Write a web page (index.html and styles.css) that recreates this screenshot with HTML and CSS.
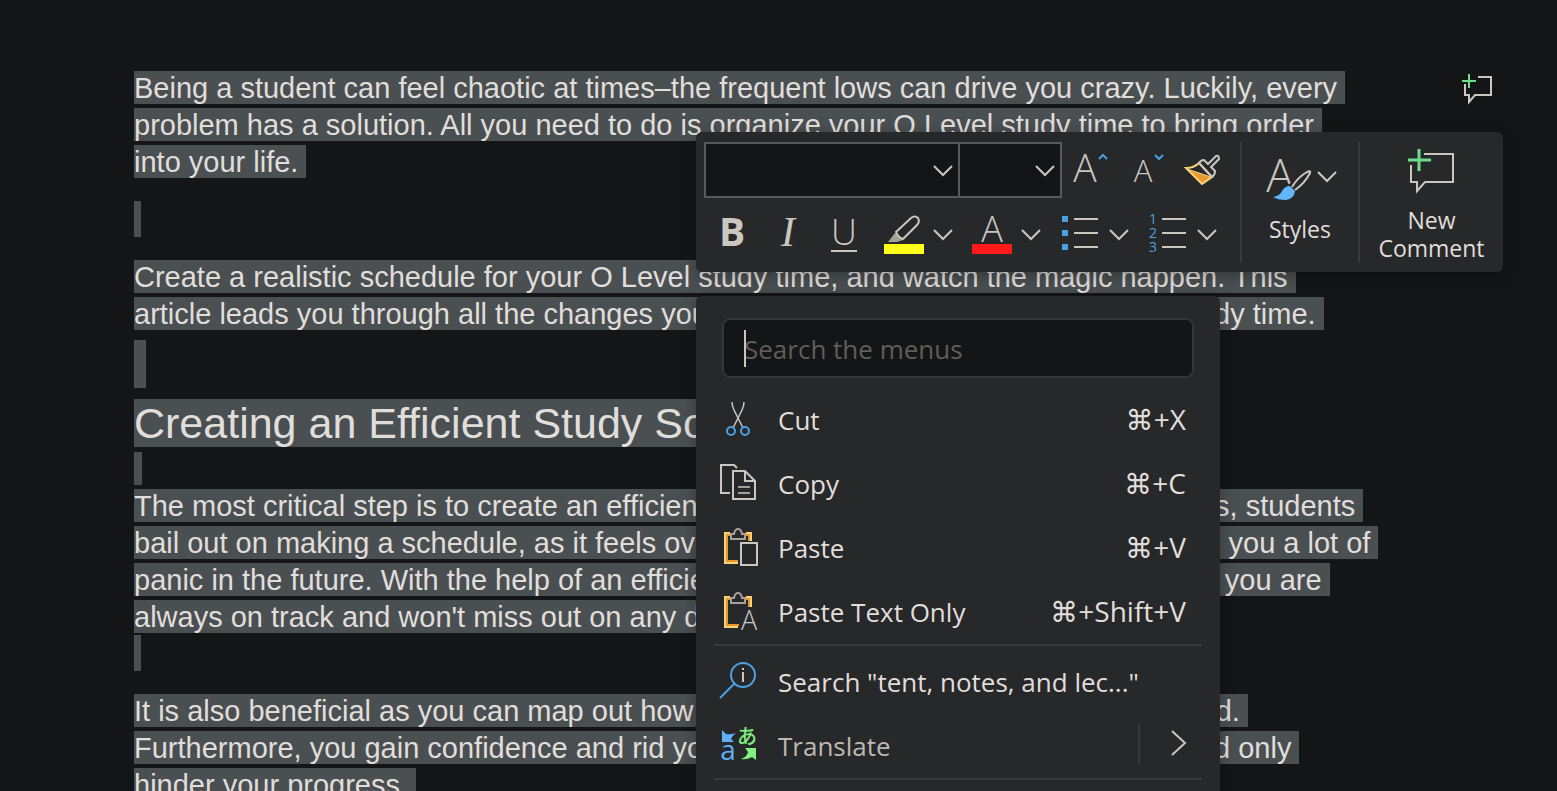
FILE: index.html
```html
<!DOCTYPE html>
<html lang="en">
<head>
  <meta charset="UTF-8">
  <title>Study Schedule</title>
  <link rel="stylesheet" href="styles.css">
</head>
<body>

  <main class="page">
    <article class="document">
      <p>
        <mark>Being a student can feel chaotic at times–the frequent lows can drive you crazy. Luckily, every<br>
        problem has a solution. All you need to do is organize your O Level study time to bring order<br>
        into your life.</mark>
      </p>
      <div class="blank blank-tall"></div>
      <p>
        <mark>Create a realistic schedule for your O Level study time, and watch the magic happen. This<br>
        article leads you through all the changes you need to make to help optimize your study time.</mark>
      </p>
      <div class="blank blank-title"></div>
      <h1><mark>Creating an Efficient Study Schedule</mark></h1>
      <div class="blank blank-small"></div>
      <p>
        <mark>The most critical step is to create an efficient useful study schedule. Most of the times, students<br>
        bail out on making a schedule, as it feels overwhelming, but starting it early can save you a lot of<br>
        panic in the future. With the help of an efficient simple schedule, you can ensure that you are<br>
        always on track and won't miss out on any deadlines.</mark>
      </p>
      <div class="blank blank-after"></div>
      <p>
        <mark>It is also beneficial as you can map out how your school day and night will be planned.<br>
        Furthermore, you gain confidence and rid yourself of the usual exam stress that could only<br>
        hinder your progress.</mark>
      </p>
    </article>

    <button class="margin-comment" aria-label="Add comment">
      <svg width="34" height="34" viewBox="0 0 34 34">
        <path class="line" d="M18 5H31V23H15L9 30V23H5V12"/>
        <path class="green" d="M9 2V16M2 9H16"/>
      </svg>
    </button>

    <!-- Mini toolbar -->
    <div class="toolbar">
      <div class="tools">
        <div class="tool-row">
          <div class="picker picker-font">
            <select aria-label="Font"><option></option></select>
            <svg class="chevron" width="20" height="20" viewBox="0 0 20 20"><path class="line" d="M1 6L10 15L19 6"/></svg>
          </div>
          <div class="picker picker-size">
            <select aria-label="Font size"><option></option></select>
            <svg class="chevron" width="20" height="20" viewBox="0 0 20 20"><path class="line" d="M1 6L10 15L19 6"/></svg>
          </div>
          <button class="tool" aria-label="Increase font size">
            <svg width="40" height="40" viewBox="0 0 40 40">
              <text class="letter" x="14" y="32" font-size="39">A</text>
              <path class="blue" d="M28 9L32 5L36 9"/>
            </svg>
          </button>
          <button class="tool" aria-label="Decrease font size">
            <svg width="40" height="40" viewBox="0 0 40 40">
              <text class="letter" x="16" y="32" font-size="31">A</text>
              <path class="blue" d="M28 5L32 9L36 5"/>
            </svg>
          </button>
          <button class="tool" aria-label="Format painter">
            <svg width="40" height="40" viewBox="0 0 40 40">
              <path d="M4 19L28 27L19 34Z" fill="#e8992e"/>
              <path d="M3 18Q11 18 16 13L29 27L19 34Z" fill="none" stroke="#f9d27c" stroke-width="2"/>
              <path d="M4 19L28 27" stroke="#f9d27c" stroke-width="1"/>
              <path class="line" d="M16 13Q18 10 21 10L25 14L33 6Q36 5 36 9L28 17L32 21Q32 25 29 27Z"/>
            </svg>
          </button>
        </div>
        <div class="tool-row">
          <button class="tool bold" aria-label="Bold">B</button>
          <button class="tool italic" aria-label="Italic">I</button>
          <button class="tool underline" aria-label="Underline"><span>U</span></button>
          <button class="tool-split" aria-label="Text highlight color">
            <svg width="40" height="40" viewBox="0 0 40 40">
              <path d="M4 28L11 19L19 26L13 28Z" fill="#a8a196"/>
              <path class="line" d="M12 18L27 4Q31 1 34 4Q36 8 33 11L19 25Q14 23 12 18Z"/>
              <rect y="30" width="40" height="10" fill="#ffff1a"/>
            </svg>
            <svg width="20" height="20" viewBox="0 0 20 20"><path class="line" d="M1 6L10 15L19 6"/></svg>
          </button>
          <button class="tool-split" aria-label="Font color">
            <svg width="40" height="40" viewBox="0 0 40 40">
              <text class="letter" x="20" y="28" font-size="36">A</text>
              <rect y="30" width="40" height="10" fill="#ff1a1a"/>
            </svg>
            <svg width="20" height="20" viewBox="0 0 20 20"><path class="line" d="M1 6L10 15L19 6"/></svg>
          </button>
          <button class="tool-split" aria-label="Bullets">
            <svg width="40" height="40" viewBox="0 0 40 40">
              <path d="M2 2h6v6H2zM2 16h6v6H2zM2 30h6v6H2z" fill="#4ca0e0"/>
              <path class="line" d="M14 5H38M14 19H38M14 33H38"/>
            </svg>
            <svg width="20" height="20" viewBox="0 0 20 20"><path class="line" d="M1 6L10 15L19 6"/></svg>
          </button>
          <button class="tool-split" aria-label="Numbering">
            <svg width="40" height="40" viewBox="0 0 40 40">
              <g class="digits">
                <text x="5" y="10">1</text>
                <text x="5" y="24">2</text>
                <text x="5" y="38">3</text>
              </g>
              <path class="line" d="M14 5H38M14 19H38M14 33H38"/>
            </svg>
            <svg width="20" height="20" viewBox="0 0 20 20"><path class="line" d="M1 6L10 15L19 6"/></svg>
          </button>
        </div>
      </div>

      <button class="big-tool styles">
        <span class="big-icon">
          <svg width="48" height="48" viewBox="0 0 48 48">
            <text class="letter" x="15" y="38" font-size="46">A</text>
            <path d="M9 43Q15 42 17 37Q20 32 25 32L44 17Q48 15 46 20L30 38Q28 46 19 46Q12 46 9 43Z" fill="#27282a" stroke="#27282a" stroke-width="4"/>
            <path class="line" d="M27 33Q33 23 42 18Q46 16 45 19Q40 29 30 36"/>
            <path d="M8 43Q15 42 17 37Q20 32 25 32L30 37Q29 45 21 46Q13 46 8 43Z" fill="#62b5fb"/>
          </svg>
          <svg width="20" height="20" viewBox="0 0 20 20"><path class="line" d="M2 4L11 13L20 4"/></svg>
        </span>
        Styles
      </button>

      <button class="big-tool comment">
        <svg width="48" height="46" viewBox="0 0 48 46">
          <path class="line" d="M16 6H45V34H17L9 43V34H3V17"/>
          <path class="green wide" d="M11 1V23M0 12H23"/>
        </svg>
        New<br>Comment
      </button>
    </div>

    <!-- Context menu -->
    <div class="menu">
      <div class="search">
        <input type="text" placeholder="Search the menus" aria-label="Search the menus">
        <span class="caret"></span>
      </div>
      <button class="item">
        <svg width="40" height="40" viewBox="0 0 40 40">
          <path class="line thin" d="M14 2Q14 6 16 10L25 28M26 2Q26 6 24 10L15 28"/>
          <circle class="blue" cx="13" cy="31" r="4"/>
          <circle class="blue" cx="27" cy="31" r="4"/>
        </svg>
        <span>Cut</span><kbd>⌘+X</kbd>
      </button>
      <button class="item">
        <svg width="40" height="40" viewBox="0 0 40 40">
          <path class="line" d="M12 29H3V1H16L19 4M15 7H27L37 17V35H15ZM27 7V17H37"/>
          <path class="dim" d="M20 23H32M20 29H32"/>
        </svg>
        <span>Copy</span><kbd>⌘+C</kbd>
      </button>
      <button class="item">
        <svg width="40" height="40" viewBox="0 0 40 40">
          <path class="yellow" d="M12 5H7V35H20M28 5H33V13"/>
          <path class="orange" d="M12 7H9V33H20M28 7H31V13"/>
          <path class="dim" d="M13 11V6H16Q17 1 20 1Q23 1 24 6H27V11Z"/>
          <path class="line" d="M23 15H39V37H23Z"/>
        </svg>
        <span>Paste</span><kbd>⌘+V</kbd>
      </button>
      <button class="item">
        <svg width="40" height="40" viewBox="0 0 40 40">
          <path class="yellow" d="M12 5H7V35H20M28 5H33V15"/>
          <path class="orange" d="M12 7H9V33H21M28 7H31V15"/>
          <path class="dim" d="M13 11V6H16Q17 1 20 1Q23 1 24 6H27V11Z"/>
          <text class="letter" x="31" y="38" font-size="27">A</text>
        </svg>
        <span>Paste Text Only</span><kbd>⌘+Shift+V</kbd>
      </button>
      <hr>
      <button class="item">
        <svg width="40" height="40" viewBox="0 0 40 40">
          <circle class="blue" cx="25" cy="13" r="12"/>
          <path class="blue" d="M17 21L2 36"/>
          <path class="line" d="M25 6V8M25 10V20"/>
        </svg>
        <span>Search "tent, notes, and lec..."</span>
      </button>
      <button class="item translate">
        <svg width="40" height="40" viewBox="0 0 40 40">
          <path d="M4 4L8 8Q12 9 18 7Q14 10 13 13L16 16H4Z" fill="#5fb2f8"/>
          <path d="M38 22V34L34 31Q29 34 23 33Q29 31 30 26L27 22Z" fill="#7ff07f"/>
          <text class="latin" x="10" y="34">a</text>
          <text class="kana" x="29" y="18">あ</text>
        </svg>
        <span>Translate</span>
        <svg class="submenu" width="16" height="26" viewBox="0 0 16 26"><path class="line" d="M2 0L15 12L2 24"/></svg>
      </button>
      <hr>
    </div>
  </main>

</body>
</html>
```

FILE: styles.css
```css
* {
  box-sizing: border-box;
}
body {
  margin: 0;
  background: #141517;
  color: #e0dedb;
  font-family: "Open Sans", "Noto Sans", "DejaVu Sans", sans-serif;
}
.page {
  position: relative;
  height: 100vh;
  overflow: hidden;
}

/* document */
.document {
  padding: 70px 0 0 134px;
  font-family: "Liberation Sans", Arial, sans-serif;
  font-size: 29px;
  line-height: 37px;
  white-space: nowrap;
}
.document p,
.document h1 {
  margin: 0;
}
.document h1 {
  font-size: 43px;
  line-height: 48px;
  font-weight: normal;
}
mark {
  background: #4a4f52;
  color: #e0dedb;
  padding: 1px 8px 0 0;
  -webkit-box-decoration-break: clone;
  box-decoration-break: clone;
}
h1 mark {
  padding-top: 0;
}
.blank {
  width: 7px;
  height: 36px;
  background: #4a4f52;
}
.blank-tall {
  margin: 20px 0 22px;
}
.blank-title {
  width: 12px;
  height: 48px;
  margin: 7px 0 11px;
}
.blank-small {
  width: 8px;
  height: 33px;
  margin: 5px 0 3px;
}
.blank-after {
  margin: -1px 0 22px;
}

/* buttons and icons */
button {
  border: none;
  background: none;
  color: inherit;
  font-family: inherit;
  padding: 0;
  cursor: pointer;
}
svg {
  display: block;
  flex: none;
  fill: none;
  overflow: visible;
}
.line {
  stroke: #cbc6c0;
  stroke-width: 2;
}
.thin {
  stroke-width: 1.5;
}
.dim {
  stroke: #a8a196;
  stroke-width: 2;
}
.blue {
  stroke: #4ca0e0;
  stroke-width: 2;
}
.green {
  stroke: #6fdd87;
  stroke-width: 2;
}
.wide {
  stroke-width: 3;
}
.yellow {
  stroke: #f9d27c;
  stroke-width: 2;
}
.orange {
  stroke: #e8992e;
  stroke-width: 2;
}
.letter {
  fill: #cbc6c0;
  font-weight: 300;
  text-anchor: middle;
}
.digits {
  fill: #4ca0e0;
  font-size: 14px;
  text-anchor: middle;
}
.latin {
  fill: #5fb2f8;
  font-size: 28px;
  text-anchor: middle;
}
.kana {
  fill: #7ff07f;
  font-family: "Noto Sans CJK JP", sans-serif;
  font-size: 20px;
  font-weight: 500;
  text-anchor: middle;
}
.margin-comment {
  position: absolute;
  top: 72px;
  right: 63px;
}

/* mini toolbar */
.toolbar {
  position: absolute;
  top: 132px;
  left: 696px;
  display: flex;
  padding: 10px 0 10px 8px;
  background: #27282a;
  border-radius: 6px;
  box-shadow: 0 4px 16px rgba(0, 0, 0, 0.3);
}
.tools {
  padding-right: 9px;
}
.tool-row {
  display: flex;
  align-items: center;
  height: 56px;
}
.tool-row + .tool-row {
  margin-top: 8px;
}
.picker {
  position: relative;
}
.picker select {
  appearance: none;
  display: block;
  width: 100%;
  height: 56px;
  border: 2px solid #555a5f;
  border-radius: 0;
  background: #141517;
  color: inherit;
}
.picker-font {
  width: 256px;
}
.picker-size {
  width: 104px;
  margin: 0 1px 0 -2px;
}
.chevron {
  position: absolute;
  right: 7px;
  top: 18px;
  pointer-events: none;
}
.tool {
  display: flex;
  justify-content: center;
  align-items: center;
  width: 56px;
  height: 56px;
  color: #cbc6c0;
}
.tool-split {
  display: flex;
  align-items: center;
  gap: 9px;
  width: 88px;
  height: 56px;
  padding-left: 12px;
}
.bold {
  padding-bottom: 8px;
  font-size: 39px;
  font-weight: 700;
}
.italic {
  padding-bottom: 4px;
  font-family: "Liberation Serif", serif;
  font-size: 42px;
  font-style: italic;
}
.underline {
  padding-bottom: 2px;
  font-size: 36px;
  font-weight: 300;
}
.underline span {
  line-height: 36px;
  border-bottom: 2px solid #cbc6c0;
}
.big-tool {
  display: flex;
  flex-direction: column;
  align-items: center;
  height: 120px;
  border-left: 2px solid #38393b;
  font-size: 23px;
  line-height: 28px;
}
.big-icon {
  display: flex;
  align-items: center;
  gap: 3px;
}
.styles {
  width: 118px;
  padding-top: 12px;
  gap: 13px;
}
.comment {
  display: block;
  width: 145px;
  padding-top: 6px;
}
.comment svg {
  margin: 0 auto 12px;
}

/* context menu */
.menu {
  position: absolute;
  top: 296px;
  left: 696px;
  width: 524px;
  padding: 22px 0 20px;
  background: #27282a;
  border-radius: 6px;
  box-shadow: 0 4px 16px rgba(0, 0, 0, 0.3);
}
.search {
  position: relative;
  margin: 0 26px 10px;
}
.search input {
  display: block;
  width: 100%;
  height: 60px;
  padding: 2px 20px 0;
  border: 2px solid #343537;
  border-radius: 8px;
  background: #141517;
  color: inherit;
  font-family: inherit;
  font-size: 26px;
}
.search input::placeholder {
  color: #605d59;
}
.caret {
  position: absolute;
  left: 22px;
  top: 12px;
  width: 2px;
  height: 37px;
  background: #cbc6c0;
}
.item {
  display: flex;
  align-items: center;
  gap: 20px;
  width: 100%;
  height: 64px;
  padding: 0 34px 0 22px;
  font-size: 26px;
  text-align: left;
}
.item kbd {
  margin-left: auto;
  padding-bottom: 2px;
  font-family: inherit;
  font-size: 28px;
}
.menu hr {
  height: 2px;
  margin: 0 18px 4px;
  border: none;
  background: #38393b;
}
.translate {
  color: #bdb8b2;
}
.submenu {
  box-sizing: content-box;
  margin: 0 0 4px auto;
  padding: 7px 0 7px 30px;
  border-left: 2px solid #38393b;
}
```
